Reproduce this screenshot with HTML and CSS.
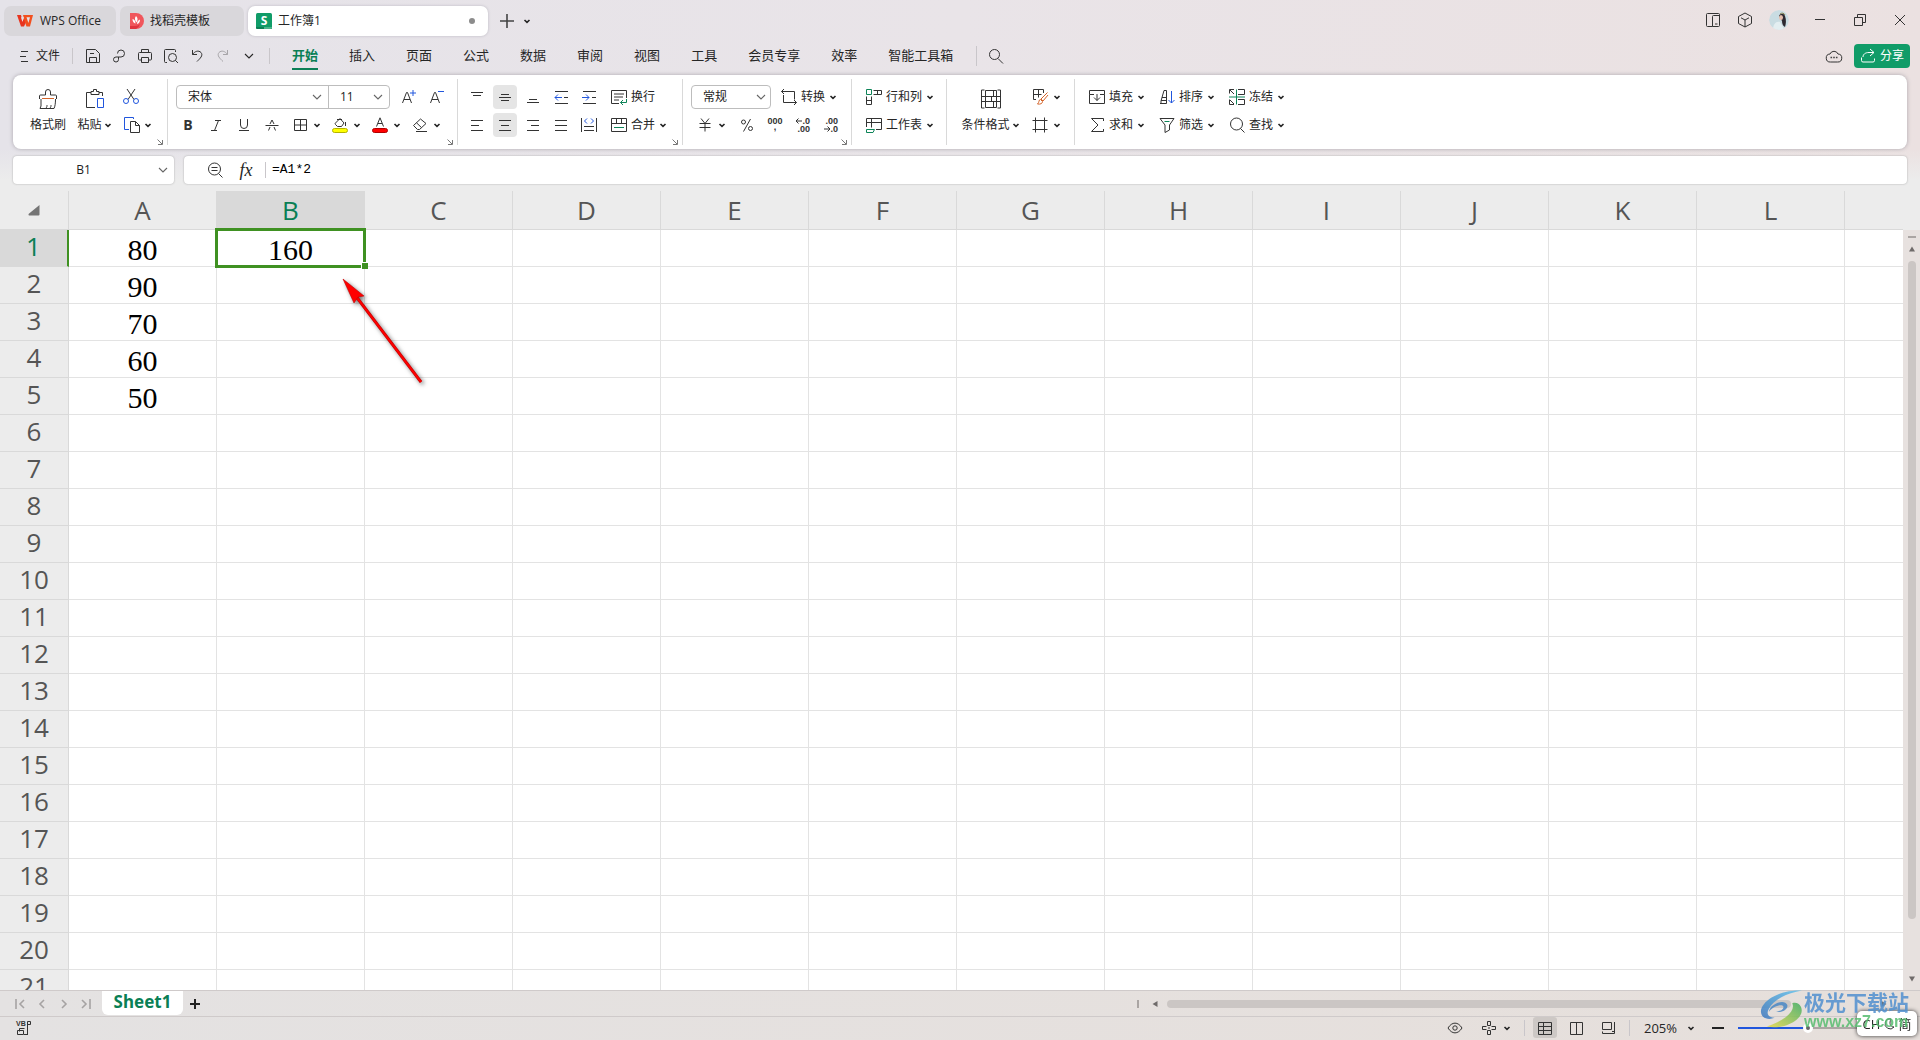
FILE: index.html
```html
<!DOCTYPE html>
<html lang="zh-CN">
<head>
<meta charset="utf-8">
<title>工作簿1 - WPS Office</title>
<link rel="stylesheet" href="styles.css">
</head>
<body>
<svg class="defs" aria-hidden="true">
  <symbol id="chev" viewBox="0 0 10 10"><path d="M2.5 4 5 6.400 7.500 4" fill="none" stroke="currentColor" stroke-width="1.6"/></symbol>
  <symbol id="chev-lg" viewBox="0 0 10 10"><path d="M1 3 5 7 9 3" fill="none" stroke="currentColor" stroke-width="1.1"/></symbol>
  <symbol id="launch" viewBox="0 0 6 6"><path d="M.5 .5 5 5M5.500 1v4.500H1" fill="none" stroke="currentColor" stroke-width="1"/></symbol>
</svg>

<header class="titlebar">
  <button class="tab tab-home"><svg class="i16" viewBox="0 0 16 16"><path d="M0 2h4l1.500 6L8 2.500h2L9 9l-2 4.500H4z" fill="#e8341f"/><path d="M6 2h10l-3 11.500H9.500L8 9.500z" fill="#f2501f"/><path d="M4 4.200h3L5.400 9zM9.500 4.200H13L11.400 10z" fill="#e7e3e6"/></svg><span>WPS Office</span></button>
  <button class="tab tab-template"><svg class="i16" viewBox="0 0 16 16"><path d="M2 0h6a8 8 0 0 1 0 16H2z" fill="#f0565c"/><path d="M2 13h5a7 7 0 0 0 5-2 8 8 0 0 1-4 5H2z" fill="#e0343e"/><path d="M8 3c2 2 2 4 .5 6.500C6.500 7 6.500 5 8 3zM4.500 6c2 .5 3 2 3 4.500-2-.3-3-2-3-4.500zM12 6.500c0 2.500-1 4-3 4.500 0-2 1-4 3-4.500z" fill="#fff"/></svg><span>找稻壳模板</span></button>
  <button class="tab tab-active"><svg class="i16" viewBox="0 0 16 16"><rect width="16" height="16" rx="1.500" fill="#109c68"/><path d="M0 14h16v.5a1.500 1.500 0 0 1-1.500 1.500h-13A1.500 1.500 0 0 1 0 14.500z" fill="#0b7f54"/><path d="M8 14h8v.5a1.500 1.500 0 0 1-1.500 1.500H8z" fill="#49b48a"/><text x="8" y="12" text-anchor="middle" class="t-logo">S</text></svg><span>工作簿1</span><i class="dot"></i></button>
  <button class="ib" aria-label="新建"><svg class="i16" viewBox="0 0 16 16"><path d="M8 1v14M1 8h14" class="s2"/></svg></button>
  <button class="chev-btn" aria-label="更多"><svg class="chev"><use href="#chev"/></svg></button>
  <div class="window-tools">
    <button class="wt" aria-label="侧栏"><svg class="i16" viewBox="0 0 16 16"><path d="M7.500 14.500h-5a1 1 0 0 1-1-1v-11a1 1 0 0 1 1-1h11a1 1 0 0 1 1 1v11a1 1 0 0 1-1 1zM7.500 14.500V4.500a1 1 0 0 1 1-1h6M10 12h2.500" class="s"/></svg></button>
    <button class="wt" aria-label="应用"><svg class="i16" viewBox="0 0 16 16"><path d="M8 1 14.500 4.500v7L8 15l-6.500-3.500v-7zM8 15V8M4 5.800 8 8l4-2.200" class="s"/></svg></button>
    <button class="wt wt-account" aria-label="账户"><svg class="avatar" viewBox="0 0 20 20"><circle cx="10" cy="10" r="10" fill="#c9dce2"/><path d="M4 20c0-6 3-9 7-8l4 7a10 10 0 0 1-11 1z" fill="#e3eef1"/><path d="M10 6c1-3 5-3 6 0 1.500 4 1 8 0 11-2-1-3-3-3-6z" fill="#2d2930"/><ellipse cx="12" cy="7.500" rx="2" ry="2.600" fill="#e6bfae"/><path d="M11 4c2-1.500 4-1 5 1" stroke="#8b8554" fill="none"/></svg></button>
    <button class="wc wc-first" aria-label="最小化"><svg class="i16" viewBox="0 0 16 16"><path d="M3 7.500h10" class="s"/></svg></button>
    <button class="wc" aria-label="还原"><svg class="i16" viewBox="0 0 16 16"><path d="M2.500 5.500h8v8h-8zM5.500 5.500v-3h8v8h-3" class="s"/></svg></button>
    <button class="wc" aria-label="关闭"><svg class="i16" viewBox="0 0 16 16"><path d="M3 3l10 10M13 3 3 13" class="s"/></svg></button>
  </div>
</header>

<nav class="menubar">
  <button class="file"><svg class="i12" viewBox="0 0 12 12"><path d="M3 1.500h7M2 6.500h6M3 11.500h7" class="s"/></svg><span>文件</span></button>
  <i class="vsep"></i>
  <div class="quick">
    <button aria-label="保存"><svg class="i16" viewBox="0 0 16 16"><path d="M1.500 14.500v-13h9l4 4v9zM4.500 14.500v-5h7v5M5 5.500h4" class="s"/></svg></button>
    <button aria-label="分享"><svg class="i16" viewBox="0 0 16 16"><path d="M6.500 5.500a3.500 3.500 0 1 1 3.500 3.500H5a2.500 2.500 0 1 0 2.500 2.500V9" class="s"/></svg></button>
    <button aria-label="打印"><svg class="i16" viewBox="0 0 16 16"><path d="M4.500 4.500v-3h7v3M4.500 12H2.500a1 1 0 0 1-1-1V5.500a1 1 0 0 1 1-1h11a1 1 0 0 1 1 1V11a1 1 0 0 1-1 1h-2M4.500 9.500h7v5h-7z" class="s"/></svg></button>
    <button aria-label="预览"><svg class="i16" viewBox="0 0 16 16"><path d="M4 14.500H2.500a1 1 0 0 1-1-1v-11a1 1 0 0 1 1-1h9a1 1 0 0 1 1 1V4M12.500 12.500l2.500 2.500" class="s"/><circle cx="9.500" cy="9.500" r="4" class="s"/></svg></button>
    <button aria-label="撤销"><svg class="i16" viewBox="0 0 16 16"><path d="M3.500 2v4.500H8M3.500 6.500C6 3 9.500 2 12 4.500c2.500 3-1 6-4 9" class="s"/></svg></button>
    <button class="muted" aria-label="恢复"><svg class="i16" viewBox="0 0 16 16"><path d="M12.500 2v4.500H8M12.500 6.500C10 3 6.500 2 4 4.500c-2.500 3 1 6 4 9" class="s"/></svg></button>
    <button aria-label="自定义"><svg class="i10"><use href="#chev-lg"/></svg></button>
  </div>
  <i class="vsep"></i>
  <div class="menus">
    <a href="#" class="on">开始</a><a href="#">插入</a><a href="#">页面</a><a href="#">公式</a><a href="#">数据</a><a href="#">审阅</a><a href="#">视图</a><a href="#">工具</a><a href="#">会员专享</a><a href="#">效率</a><a href="#">智能工具箱</a>
  </div>
  <i class="vsep tall"></i>
  <button class="ib search" aria-label="搜索"><svg class="i16" viewBox="0 0 16 16"><circle cx="6.500" cy="6.500" r="5" class="s"/><path d="M10 10.500l5 5" class="s"/></svg></button>
  <button class="ib comment" aria-label="评论"><svg class="i16" viewBox="0 0 16 16"><path d="M4 6a4.300 4.300 0 0 1 8 0 4 4 0 0 1-.5 8h-7A4 4 0 0 1 4 6z" class="s"/><path d="M4.500 9.500h1.600M7.200 9.500h1.600M9.900 9.500h1.600" class="s2"/></svg></button>
  <button class="share"><svg class="i16" viewBox="0 0 16 16"><path d="M10 1l4 3.500L10 8M14 4.500H9C5 4.500 3 6.500 3 9M1.500 9.500v3a1.500 1.500 0 0 0 1.500 1.500h10a1.500 1.500 0 0 0 1.500-1.500v-2" class="s"/></svg><span>分享</span></button>
</nav>

<section class="ribbon" aria-label="开始">
  <div class="group g-clip">
    <button class="big brush"><svg class="i20" viewBox="0 0 20 20"><path d="M1.500 10V7a1 1 0 0 1 1-1h5V3a2.500 2.500 0 0 1 5 0v3h5a1 1 0 0 1 1 1v3M3 10v7l-1 2.500h14c1-2 1.500-5 1.500-9.500M8 19c1-1 1-2 1-3M12 19c1-1 1-2 1-3" class="s"/><path d="M4 9.500h12" class="s o"/></svg><span>格式刷</span></button>
    <button class="big paste"><svg class="i20" viewBox="0 0 20 20"><path d="M6 3.500H1.500v15H10M14 3.500h3.500V7M6 5.500v-3h2.500v-2h3v2H14v3z" class="s"/><path d="M12.500 9.500h6v9h-6z" class="s b"/></svg><span>粘贴<svg class="chev"><use href="#chev"/></svg></span></button>
    <div class="rows">
      <button class="ib" aria-label="剪切"><svg class="i16" viewBox="0 0 16 16"><path d="M4 0l7 10.500M12 0 5 10.500" class="s"/><circle cx="3" cy="12" r="2.500" class="s b"/><circle cx="13" cy="12" r="2.500" class="s b"/></svg></button>
      <button class="split" aria-label="复制"><svg class="i18" viewBox="0 0 18 18"><path d="M6 13.500H1.500v-12h9V3" class="s b"/><path d="M7.500 5.500h5l4 4v7h-9zM12.500 5.500v4h4" class="s"/></svg><svg class="chev"><use href="#chev"/></svg></button>
    </div>
    <svg class="launch"><use href="#launch"/></svg>
  </div>

  <div class="group">
    <div class="rows">
      <div class="row">
        <div class="combo-pair">
          <label class="combo font"><select aria-label="字体"><option>宋体</option></select><svg class="i10"><use href="#chev-lg"/></svg></label>
          <label class="combo size"><select aria-label="字号"><option>11</option></select><svg class="i10"><use href="#chev-lg"/></svg></label>
        </div>
        <button class="ib" aria-label="增大字号"><svg class="i16" viewBox="0 0 16 16"><path d="M1.500 14 5.500 3.500h1L10.500 14M3 10.500h6" class="s"/><path d="M12 1v6M9 4h6" class="s b"/></svg></button>
        <button class="ib" aria-label="减小字号"><svg class="i16" viewBox="0 0 16 16"><path d="M1.500 14 5.500 3.500h1L10.500 14M3 10.500h6" class="s"/><path d="M9 2.500h6" class="s b"/></svg></button>
      </div>
      <div class="row">
        <button class="ib" aria-label="加粗"><svg class="i16" viewBox="0 0 16 16"><text x="8" y="13" text-anchor="middle" class="t-bold">B</text></svg></button>
        <button class="ib" aria-label="倾斜"><svg class="i16" viewBox="0 0 16 16"><path d="M7 3.500h6M3 13.500h6M10.500 3.500l-4 10" class="s"/></svg></button>
        <button class="ib" aria-label="下划线"><svg class="i16" viewBox="0 0 16 16"><path d="M4.500 2v6a3.500 3.500 0 0 0 7 0V2M3 13.500h10" class="s"/></svg></button>
        <button class="ib" aria-label="删除线"><svg class="i16" viewBox="0 0 16 16"><path d="M4.500 13.500 6 10M10 10l1.500 3.500M6 7l2-4 2 4M1.500 8.500h13" class="s"/></svg></button>
        <button class="split" aria-label="边框"><svg class="i16" viewBox="0 0 16 16"><path d="M2.500 2.500h12v11h-12zM8.500 2.500v11M2.500 8h12" class="s"/></svg><svg class="chev"><use href="#chev"/></svg></button>
        <button class="split" aria-label="填充颜色"><svg class="i16" viewBox="0 0 16 16"><path d="M8 1.500 3.500 6a1 1 0 0 0 0 1.500l2 2h4L12 6zM5 2.500h5M13.500 5v4" class="s"/><rect x=".5" y="11.500" width="15" height="4" rx="2" fill="#ff0" stroke="#b5b300"/></svg><svg class="chev"><use href="#chev"/></svg></button>
        <button class="split" aria-label="字体颜色"><svg class="i16" viewBox="0 0 16 16"><path d="M4.500 9.500 8 .8l3.500 8.700M6 6.500h4" class="s"/><rect x=".5" y="11.500" width="15" height="4" rx="2" fill="red" stroke="#b00000"/></svg><svg class="chev"><use href="#chev"/></svg></button>
        <button class="split" aria-label="清除"><svg class="i16" viewBox="0 0 16 16"><path d="M8.500 2 1.500 8.500l4 4h2l6.500-6zM4.500 5.800l5 4.800M4 14.500h11" class="s"/></svg><svg class="chev"><use href="#chev"/></svg></button>
      </div>
    </div>
    <svg class="launch"><use href="#launch"/></svg>
  </div>

  <div class="group g-align">
    <div class="rows">
      <div class="row">
        <button class="ib" aria-label="顶端对齐"><svg class="i16" viewBox="0 0 16 16"><path d="M2 3.500h12M4 6.500h8" class="s"/></svg></button>
        <button class="ib on" aria-label="垂直居中"><svg class="i16" viewBox="0 0 16 16"><path d="M4 5.500h8M2 8.500h12M4 11.500h8" class="s"/></svg></button>
        <button class="ib" aria-label="底端对齐"><svg class="i16" viewBox="0 0 16 16"><path d="M4 10.500h8M2 13.500h12" class="s"/></svg></button>
        <button class="ib" aria-label="减少缩进"><svg class="i16" viewBox="0 0 16 16"><path d="M2 2.500h13M2 14.500h13M11 8.500h4" class="s"/><path d="M2 8.500h7M5 5.500l-3 3 3 3" class="s b"/></svg></button>
        <button class="ib" aria-label="增加缩进"><svg class="i16" viewBox="0 0 16 16"><path d="M2 2.500h13M2 14.500h13M11 8.500h4" class="s"/><path d="M1 8.500h7M5 5.500l3 3-3 3" class="s b"/></svg></button>
        <button class="tb"><svg class="i16" viewBox="0 0 16 16"><path d="M8 14.500H.5V1.500h15V9M3 5h10M3 8h9M3 11h5" class="s"/><path d="M15.500 10v3.500h-6M12 11l-2.500 2.500L12 16" class="s g"/></svg><span>换行</span></button>
      </div>
      <div class="row">
        <button class="ib" aria-label="左对齐"><svg class="i16" viewBox="0 0 16 16"><path d="M2 3.500h12M2 8.500h8M2 13.500h12" class="s"/></svg></button>
        <button class="ib on" aria-label="水平居中"><svg class="i16" viewBox="0 0 16 16"><path d="M2 3.500h12M4 8.500h8M2 13.500h12" class="s"/></svg></button>
        <button class="ib" aria-label="右对齐"><svg class="i16" viewBox="0 0 16 16"><path d="M2 3.500h12M6 8.500h8M2 13.500h12" class="s"/></svg></button>
        <button class="ib" aria-label="两端对齐"><svg class="i16" viewBox="0 0 16 16"><path d="M2 3.500h12M2 8.500h12M2 13.500h12" class="s"/></svg></button>
        <button class="ib" aria-label="分散对齐"><svg class="i16" viewBox="0 0 16 16"><path d="M.5 1v14M15.500 1v14M3 9.500h10M3 13.500h10" class="s"/><path d="M6 1.500 3.500 4 6 6.500M10 1.500 12.500 4 10 6.500" class="s b"/></svg></button>
        <button class="tb"><svg class="i16" viewBox="0 0 16 16"><path d="M.5 1.500h15v13H.5zM.5 6.500h15M5.500 1.500v5M10.500 1.500v5" class="s"/><path d="M3 10.500h10" class="s g"/></svg><span>合并</span><svg class="chev"><use href="#chev"/></svg></button>
      </div>
    </div>
    <svg class="launch"><use href="#launch"/></svg>
  </div>

  <div class="group">
    <div class="rows">
      <div class="row">
        <label class="combo boxed"><select aria-label="数字格式"><option>常规</option></select><svg class="i10"><use href="#chev-lg"/></svg></label>
        <button class="tb"><svg class="i16" viewBox="0 0 16 16"><path d="M.5 2.500h13v8M3 0 .5 2.500 3 5M2.500 6v7.500h13M13 11l2.500 2.500L13 16" class="s"/></svg><span>转换</span><svg class="chev"><use href="#chev"/></svg></button>
      </div>
      <div class="row">
        <button class="split wide" aria-label="货币"><svg class="i16" viewBox="0 0 16 16"><path d="M4 1.500l4 5 4-5M8 6.500v8M2.500 6.500h11M2.500 10.500h11" class="s"/></svg><svg class="chev"><use href="#chev"/></svg></button>
        <button class="ib" aria-label="百分比"><svg class="i16" viewBox="0 0 16 16"><circle cx="4.500" cy="5" r="2" class="s"/><circle cx="11.500" cy="11.500" r="2" class="s"/><path d="M11.500 2 4.500 14.500" class="s"/></svg></button>
        <button class="ib" aria-label="千位分隔"><svg class="i16" viewBox="0 0 16 16"><text x="8" y="7" text-anchor="middle" class="t-num">000</text><text x="8" y="13" text-anchor="middle" class="t-num">,</text></svg></button>
        <button class="ib" aria-label="增加小数位"><svg class="i16" viewBox="0 0 16 16"><text x="15" y="7" text-anchor="end" class="t-num">.0</text><text x="15" y="15" text-anchor="end" class="t-num">.00</text><path d="M1 4h6M3.500 1.500 1 4l2.500 2.500" class="s"/></svg></button>
        <button class="ib" aria-label="减少小数位"><svg class="i16" viewBox="0 0 16 16"><text x="15" y="7" text-anchor="end" class="t-num">.00</text><text x="15" y="15" text-anchor="end" class="t-num">.0</text><path d="M1 12h6M4.500 9.500 7 12l-2.500 2.500" class="s"/></svg></button>
      </div>
    </div>
    <svg class="launch"><use href="#launch"/></svg>
  </div>

  <div class="group">
    <div class="rows">
      <button class="tb"><svg class="i16" viewBox="0 0 16 16"><path d="M7.500 1.500h8v4h-8M11.500 1.500v4M.5 7.500v8h5v-8M.5 11.500h5" class="s"/><path d="M.5 .5h5v5h-5z" class="s g"/></svg><span>行和列</span><svg class="chev"><use href="#chev"/></svg></button>
      <button class="tb"><svg class="i16" viewBox="0 0 16 16"><path d="M.5 10V1.500h15v11H10M.5 5.500h15M5.500 1.500v9" class="s"/><path d="M.5 12.500h8l-1.500 3H.5z" class="s g"/></svg><span>工作表</span><svg class="chev"><use href="#chev"/></svg></button>
    </div>
  </div>

  <div class="group g-format">
    <button class="big cond"><svg class="i20" viewBox="0 0 20 20"><path d="M3.500 1H.5v18h3M16.500 1h3v18h-3M4.500 1.500h11v17h-11zM.5 7.500h19M.5 12.500h19M12.500 1.500v6M10.500 7.500v5M12.500 12.500v6" class="s"/></svg><span>条件格式<svg class="chev"><use href="#chev"/></svg></span></button>
    <div class="rows">
      <button class="split" aria-label="表格样式"><svg class="i16" viewBox="0 0 16 16"><path d="M4 10.500H1.500V.5h10V4M1.500 5.500h8M6.500 .5v8" class="s"/><path d="M15.500 3.500 9 10l2 2 5-6M8.500 10.500c-2 0-1 3-3 4.500 3 .5 5-.5 5-2.500z" class="s o"/></svg><svg class="chev"><use href="#chev"/></svg></button>
      <button class="split" aria-label="单元格"><svg class="i16" viewBox="0 0 16 16"><path d="M3.500 .5v15M12.500 .5v15M.5 3.500h15M.5 12.500h15" class="s"/></svg><svg class="chev"><use href="#chev"/></svg></button>
    </div>
  </div>

  <div class="group g-last">
    <div class="rows">
      <div class="row">
        <button class="tb"><svg class="i16" viewBox="0 0 16 16"><path d="M5 5.500H.5v-4h15v4H11M.5 5.500v9h15v-9M8 5v6.500M5 8.500l3 3 3-3" class="s"/></svg><span>填充</span><svg class="chev"><use href="#chev"/></svg></button>
        <button class="tb"><svg class="i16" viewBox="0 0 16 16"><path d="M1 14.500h6.500V1.500H5L2 12v2M3 8.500h4M2 11.500h5.500" class="s"/><path d="M12.500 2v12M9.500 11l3 3 3-3" class="s b"/></svg><span>排序</span><svg class="chev"><use href="#chev"/></svg></button>
        <button class="tb"><svg class="i16" viewBox="0 0 16 16"><path d="M5 .5H.5v4M1 1l4 4M9 .5h6.500v5H9M9 10.500h6.500v5H9M5 15.500H.5v-5M1 11l4 4" class="s"/><path d="M7.500 .5v15M0 8h16" class="s g"/></svg><span>冻结</span><svg class="chev"><use href="#chev"/></svg></button>
      </div>
      <div class="row">
        <button class="tb"><svg class="i16" viewBox="0 0 16 16"><path d="M14.500 4V1.500h-12L9 8l-6.500 6.500h12V12" class="s"/></svg><span>求和</span><svg class="chev"><use href="#chev"/></svg></button>
        <button class="tb"><svg class="i16" viewBox="0 0 16 16"><path d="M1 1.500h14L10.500 8v5L6 15.500V8z" class="s"/><path d="M5.500 4.500h5" class="s g"/></svg><span>筛选</span><svg class="chev"><use href="#chev"/></svg></button>
        <button class="tb"><svg class="i16" viewBox="0 0 16 16"><circle cx="7.500" cy="7" r="6" class="s"/><path d="M11.500 11.500l4 4" class="s"/></svg><span>查找</span><svg class="chev"><use href="#chev"/></svg></button>
      </div>
    </div>
  </div>
</section>

<section class="formula">
  <div class="namebox"><input type="text" value="B1" aria-label="名称框"><svg class="i10"><use href="#chev-lg"/></svg></div>
  <div class="formula-box">
    <button class="ib" aria-label="查看"><svg class="i16" viewBox="0 0 16 16"><circle cx="7.500" cy="7" r="6" class="s"/><path d="M4.500 5.500h6M4.500 8.500h6M11.500 11.500l4 4" class="s"/></svg></button>
    <button class="fx" aria-label="插入函数">fx</button>
    <i class="vsep"></i>
    <input type="text" value="=A1*2" aria-label="编辑栏">
  </div>
</section>

<main class="sheet">
  <div class="grid">
    <table>
      <thead><tr id="columns"><th class="corner"><svg class="i12" viewBox="0 0 12 12"><path d="M11.500 1v9.500a1 1 0 0 1-1 1H1.500a1 1 0 0 1-.7-1.700z" fill="#757575"/></svg></th></tr></thead>
      <tbody id="rows"></tbody>
    </table>
    <svg class="arrow" viewBox="0 0 100 120"><g class="arrow-shadow"><path d="M22 25 88 112" fill="none" stroke="#c00000" stroke-width="3"/><path d="M22 25 88 112" fill="none" stroke="red" stroke-width="2"/><path d="M10 9 31 26 25 27 21 33z" fill="red" stroke="#c00000" stroke-width=".6"/></g></svg>
  </div>
  <div class="vscroll"><i class="grip"></i><svg class="i10" viewBox="0 0 10 10"><path d="M5 2.500 8 7.500H2z" fill="#6f6b6a"/></svg><i class="thumb"></i><svg class="i10 down" viewBox="0 0 10 10"><path d="M5 7.500 8 2.500H2z" fill="#6f6b6a"/></svg></div>
</main>

<div class="sheetbar">
  <div class="sheet-nav">
    <button aria-label="第一个"><svg class="i12" viewBox="0 0 12 12"><path d="M2 1v10M10 2 6 6l4 4" class="s2"/></svg></button>
    <button aria-label="上一个"><svg class="i12" viewBox="0 0 12 12"><path d="M8 2 4 6l4 4" class="s2"/></svg></button>
    <button aria-label="下一个"><svg class="i12" viewBox="0 0 12 12"><path d="M4 2l4 4-4 4" class="s2"/></svg></button>
    <button aria-label="最后一个"><svg class="i12" viewBox="0 0 12 12"><path d="M10 1v10M2 2l4 4-4 4" class="s2"/></svg></button>
  </div>
  <button class="sheet-tab">Sheet1</button>
  <button class="ib" aria-label="新建工作表"><svg class="i12" viewBox="0 0 12 12"><path d="M6 1v10M1 6h10" stroke="#222" stroke-width="2"/></svg></button>
  <div class="hscroll"><i class="grip"></i><svg class="i10" viewBox="0 0 10 10"><path d="M2.500 5 7.500 2v6z" fill="#6f6b6a"/></svg><i class="thumb"></i><svg class="i10" viewBox="0 0 10 10"><path d="M7.500 5 2.500 2v6z" fill="#6f6b6a"/></svg></div>
</div>

<footer class="status">
  <button class="vbp" aria-label="VBP"><svg class="i16" viewBox="0 0 16 16"><text x="0" y="6" class="t-vb">VB</text><path d="M11.500 14.500V1.500h3v3h-3M8.500 8.500h-5v3M1.500 10.500h6v4h-6zM8 14.500h4" class="s"/></svg></button>
  <div class="status-right">
    <button class="ib" aria-label="护眼"><svg class="i16" viewBox="0 0 16 16"><path d="M1 8c4-6.500 10-6.500 14 0-4 6.500-10 6.500-14 0z" class="s"/><circle cx="8" cy="8" r="2.200" class="s"/></svg></button>
    <button class="split st-focus" aria-label="阅读模式"><svg class="i14" viewBox="0 0 14 14"><path d="M5.500 4.500v-4h3v4zM5.500 13.500v-4h3v4zM4.500 5.500h-4v3h4M9.500 5.500h4v3h-4M6 7h2" class="s"/></svg><svg class="chev"><use href="#chev"/></svg></button>
    <i class="vsep"></i>
    <button class="view on" aria-label="普通"><svg class="i14" viewBox="0 0 14 14"><path d="M.5 1.500h13v12H.5zM.5 5.500h13M.5 9.500h13M5.500 1.500v12" class="s"/></svg></button>
    <button class="view" aria-label="分页预览"><svg class="i14" viewBox="0 0 14 14"><path d="M.5 1.500h12v12H.5zM6.500 1.500v12" class="s"/></svg></button>
    <button class="view" aria-label="页面布局"><svg class="i14" viewBox="0 0 14 14"><path d="M.5 1.500h9v7h-9zM12.500 1v11.500H.5v-2M10 10.500h2" class="s"/></svg></button>
    <i class="vsep"></i>
    <button class="zoom-val">205%<svg class="chev"><use href="#chev"/></svg></button>
    <button class="ib" aria-label="缩小"><svg class="i12" viewBox="0 0 12 12"><path d="M0 6h12" stroke="#222" stroke-width="2"/></svg></button>
    <input class="zoom" type="range" min="0" max="100" value="50" aria-label="缩放">
  </div>
</footer>

<div class="ime"><span>CH</span><svg class="i12" viewBox="0 0 12 12"><path d="M8 1a5 5 0 1 0 3 8C7 9 6 5 8 1z" class="s"/></svg><span>简</span></div>
<div class="mark">
  <svg class="mark-logo" viewBox="0 0 42 40"><defs><linearGradient id="wb" x1="0" y1="1" x2="1" y2="0"><stop offset="0" stop-color="#3d76bd"/><stop offset="1" stop-color="#62c4ee"/></linearGradient><linearGradient id="wg" x1="0" y1="1" x2="1" y2="0"><stop offset="0" stop-color="#e6d94a"/><stop offset="1" stop-color="#3fae62"/></linearGradient></defs><path d="M42 1C22 0 3 9 0 21c-1 8 7 11 14 8-6 0-9-4-6-9C13 10 26 4 42 1z" fill="url(#wb)"/><path d="M8 23c1-8 16-14 19-7 1 5-7 9-12 6 4 1 8-1 8-4 0-4-11-1-15 5z" fill="#4a88c6"/><path d="M32 14c4 8-8 18-26 24 18 4 40-8 35-20-2-4-5-5-9-4z" fill="url(#wg)"/></svg>
  <div><div class="mark-name">极光下载站</div><div class="mark-url">www.xz7.com</div></div>
</div>
<script src="sheet.js"></script>
</body>
</html>
```
FILE: styles.css
```css
* { box-sizing: border-box; }
html, body { height: 100%; }
body {
  margin: 0;
  display: flex;
  flex-direction: column;
  overflow: hidden;
  font: 12px/16px "Open Sans", "Noto Sans CJK SC", sans-serif;
  color: #262626;
  background: linear-gradient(90deg, #e5e3e9, #e9e4e8 50%, #ebe1e1);
}
button, input, select { font: inherit; color: inherit; border: 0; background: none; padding: 0; margin: 0; }
button { display: flex; align-items: center; justify-content: center; white-space: nowrap; flex: none; }
input, select { outline: none; min-width: 0; }
a { color: inherit; text-decoration: none; }
svg { display: block; flex: none; overflow: visible; }
.defs { width: 0; height: 0; position: absolute; }

.s { fill: none; stroke: #333; stroke-width: 1; }
.s2 { fill: none; stroke: #444; stroke-width: 1.6; }
.b { stroke: #2156dd; }
.g { stroke: #0d8458; }
.o { stroke: #d4642a; }
.t-logo { font: bold 12px "Open Sans", sans-serif; fill: #fff; }
.t-bold { font: bold 14px "Open Sans", sans-serif; fill: #333; }
.t-num { font: bold 9px "Liberation Sans", sans-serif; fill: #333; }
.t-vb { font: bold 7px "Liberation Sans", sans-serif; fill: #333; }
.i10, .chev { width: 10px; height: 10px; }
.i12 { width: 12px; height: 12px; }
.i14 { width: 14px; height: 14px; }
.i16 { width: 16px; height: 16px; }
.i18 { width: 18px; height: 18px; }
.i20 { width: 20px; height: 20px; }
.ib { width: 24px; height: 24px; border-radius: 4px; }
.ib.on { background: #e5e5e5; }
.vsep { width: 1px; height: 16px; background: #c9c6ca; flex: none; }
.vsep.tall { height: 20px; }

/* Title bar */
.titlebar { display: flex; align-items: center; gap: 4px; padding: 6px 0 0 4px; flex: none; }
.tab { height: 30px; gap: 6px; border-radius: 7px; background: #d9d7db; justify-content: flex-start; }
.tab-home { width: 112px; padding-left: 13px; gap: 7px; }
.tab-template { width: 124px; padding-left: 8px; }
.tab-active { width: 240px; background: #fff; padding: 0 13px 0 8px; box-shadow: 0 0 3px #bbb8c0; }
.dot { width: 6px; height: 6px; border-radius: 3px; background: #8c8c8c; margin-left: auto; }
.titlebar > .ib { margin-left: 3px; }
.chev-btn { width: 10px; height: 24px; margin-left: -1px; }
.window-tools { display: flex; align-items: center; height: 28px; margin-left: auto; align-self: flex-start; }
.wt { width: 32px; height: 28px; }
.wt-account { margin-left: 2px; }
.wc { width: 40px; height: 28px; }
.wc-first { margin-left: 5px; }
.avatar { width: 20px; height: 20px; border-radius: 10px; overflow: hidden; }

/* Menu row */
.menubar { display: flex; align-items: center; height: 39px; flex: none; padding: 0 10px 0 18px; }
.file { gap: 6px; margin-right: 12px; }
.quick { display: flex; margin: 0 7px; }
.quick button { width: 26px; height: 24px; }
.muted { opacity: .35; }
.menus { display: flex; gap: 31px; margin: 0 23px 0 22px; font-size: 13px; }
.menus a { line-height: 22px; padding: 2px 0; border-bottom: 2px solid transparent; white-space: nowrap; }
.menus a.on { color: #0a7f55; font-weight: bold; border-color: #0a7f55; }
.search { margin-left: 7px; }
.comment { margin-left: auto; }
.share { width: 56px; height: 24px; margin-left: 8px; gap: 4px; border-radius: 4px; background: #109c68; color: #fff; }
.share .s { stroke: #fff; }

/* Ribbon */
.ribbon { display: flex; align-items: stretch; flex: none; margin: 0 13px; height: 74px; padding: 4px 0; background: #fff; border-radius: 8px; box-shadow: 0 0 4px #aaa6ad; }
.group { display: flex; position: relative; flex: none; padding: 6px 0 6px 8px; border-right: 1px solid #d9d9d9; }
.g-last { border: 0; }
.rows { display: flex; flex-direction: column; gap: 4px; padding-right: 8px; }
.row { display: flex; align-items: center; gap: 4px; }
.g-clip { padding-left: 10px; }
.g-clip .rows { margin-left: 4px; padding-right: 12px; }
.g-align .rows { padding-right: 10px; }
.g-align { padding-left: 7px; }
.g-align .row { padding-right: 1px; }
.big { flex-direction: column; justify-content: space-between; padding: 4px 0 4px; height: 52px; }
.big span { display: flex; align-items: center; gap: 1px; }
.brush { width: 50px; }
.paste { width: 40px; margin-left: 2px; }
.cond { width: 68px; }
.g-format { padding-left: 10px; }
.g-format .rows { padding-right: 10px; margin-left: 3px; }
.split { width: 36px; height: 24px; padding: 0 2px 0 4px; justify-content: space-between; }
.split.wide { width: 40px; padding: 0 4px 0 6px; }
.tb { height: 24px; gap: 4px; padding: 0 3px 0 6px; justify-content: flex-start; }
.tb .chev { margin-left: -1px; }
.launch { position: absolute; right: 4px; bottom: 0; width: 6px; height: 6px; color: #777; }
.combo-pair { display: flex; height: 24px; border: 1px solid #bdbdbd; border-radius: 4px; margin-right: 3px; }
.combo { display: grid; grid-template-columns: 1fr 16px; align-items: center; color: #666; }
.combo select { grid-area: 1 / 1 / 2 / 3; appearance: none; color: #222; padding-left: 11px; height: 22px; }
.combo svg { grid-area: 1 / 2; pointer-events: none; }
.font { width: 152px; border-right: 1px solid #bdbdbd; }
.size { width: 60px; }
.boxed { width: 80px; height: 24px; border: 1px solid #bdbdbd; border-radius: 4px; grid-template-columns: 1fr 14px; }

/* Formula bar */
.formula { display: flex; gap: 10px; flex: none; padding: 7px 13px 7px; background: linear-gradient(#e9e4e800, #ececec 75%); }
.namebox, .formula-box { display: flex; align-items: center; height: 28px; background: #fff; border-radius: 4px; box-shadow: 0 0 2px #a5a5a5; }
.namebox { width: 161px; padding-right: 6px; color: #666; }
.namebox input { flex: 1; text-align: center; color: #222; padding-right: 4px; }
.formula-box { flex: 1; padding-left: 19px; }
.fx { width: 24px; margin: 0 7px 0 7px; font: italic 18px/24px "Liberation Serif", serif; }
.formula-box input { flex: 1; padding-left: 6px; font: 13px/24px "Liberation Mono", monospace; color: #000; }

/* Sheet */
.sheet { display: flex; flex: 1; min-height: 0; }
.grid { flex: 1; min-width: 0; overflow: hidden; position: relative; background: #fff; }
table { width: 100%; table-layout: fixed; border-collapse: separate; border-spacing: 0; }
th { font-size: 26px; font-weight: normal; line-height: 36px; color: #555; background: #ececec; padding: 0; border: solid #d9d9d9; border-width: 0 1px 1px 0; }
thead th { width: 148px; height: 39px; }
thead th:last-child { width: auto; border-right: 0; }
thead .corner { width: 69px; }
.corner svg { margin: 0 auto; }
tbody th { line-height: 32px; padding: 0 0 4px; }
th.sel { background: #d9d9d9; color: #0a7f55; }
tbody th.sel { border-right: 2px solid #3f9122; }
td { height: 37px; padding: 4px 0 0; border: solid #e3e3e3; border-width: 0 1px 1px 0; font: 30px/32px "Liberation Serif", serif; color: #000; text-align: center; }
td:last-child { border-right: 0; }
td.active { position: relative; }
td.active::before { content: ""; position: absolute; inset: -2px -2px -2px -2px; border: 3px solid #3f9122; }
td.active::after { content: ""; position: absolute; right: -4px; bottom: -3px; width: 6px; height: 6px; background: #3f9122; border: solid #fff; border-width: 1px 0 0 1px; }
.arrow { position: absolute; left: 333px; top: 79px; width: 100px; height: 120px; }
.arrow-shadow { filter: drop-shadow(2px 2px 2px #0008); }
.vscroll { width: 17px; flex: none; display: flex; flex-direction: column; align-items: center; border-top: 39px solid #ececec; background: #e7e1df; padding: 6px 0 6px; }
.vscroll .grip { width: 8px; height: 2px; background: #aaa5a3; margin-bottom: 6px; }
.vscroll .thumb { width: 8px; flex: 0 1 658px; margin-top: 7px; border-radius: 4px; background: #cbc6c4; }
.vscroll .down { margin-top: auto; }

/* Sheet tabs */
.sheetbar { display: flex; align-items: center; flex: none; height: 27px; padding-left: 9px; border: solid #cfcaca; border-width: 1px 0; background: linear-gradient(90deg, #e4e2e2, #e6dfdb); }
.sheet-nav { display: flex; width: 93px; }
.sheet-nav button { width: 22px; height: 20px; }
.sheet-nav .s2 { stroke: #a6a3a3; }
.sheet-tab { width: 81px; height: 24px; padding-bottom: 2px; align-self: flex-start; background: #fff; border-radius: 0 0 6px 6px; color: #0a7f55; font: bold 17px/22px "Noto Sans", sans-serif; }
.hscroll { display: flex; align-items: center; width: 41%; margin-left: auto; padding-right: 31px; }
.hscroll .grip { width: 2px; height: 8px; background: #aaa5a3; margin-right: 11px; }
.hscroll .thumb { flex: 1; height: 8px; border-radius: 4px; background: #cbc6c4; margin: 0 88px 0 7px; }

/* Status bar */
.status { display: flex; align-items: center; justify-content: space-between; height: 23px; flex: none; padding: 0 43px 2px 16px; background: linear-gradient(90deg, #e4e2e2, #e6dfdb); }
.status-right { display: flex; align-items: center; }
.status-right > .ib { height: 21px; }
.st-focus { height: 21px; margin: 0 10px 0 11px; }
.view { width: 24px; height: 21px; border-radius: 3px; margin-left: 8px; }
.view.on { background: #cdc8c5; }
.view + .vsep { margin-left: 8px; }
.zoom-val { font-size: 13px; gap: 9px; margin: 0 10px 0 14px; }
.zoom { appearance: none; width: 139px; height: 12px; margin-left: 8px; }
.zoom::-webkit-slider-runnable-track { height: 2px; background: linear-gradient(90deg, #2156dd 50%, #aba6a3 50%); }
.zoom::-webkit-slider-thumb { appearance: none; width: 10px; height: 10px; margin-top: -4px; border-radius: 5px; background: #666; border: 3px solid #fff; }

/* Input-method bubble and site mark float above the window */
.ime { position: fixed; right: 3px; bottom: 4px; width: 60px; height: 25px; display: flex; align-items: center; justify-content: center; gap: 3px; background: #fff; border-radius: 5px; box-shadow: 0 0 4px #333; font-size: 13px; }
.mark { position: fixed; right: 11px; bottom: 9px; width: 148px; display: flex; gap: 2px; opacity: .85; pointer-events: none; }
.mark-logo { width: 41px; height: 40px; }
.mark-name { font: bold 21px/24px "Noto Sans CJK SC", sans-serif; color: #5090cf; white-space: nowrap; }
.mark-url { font: bold 16px/18px "Liberation Sans", sans-serif; color: #58bd70; }
```
FILE: sheet.js
```js
const letters = "ABCDEFGHIJKL".split("");
const values = { A1: 80, A2: 90, A3: 70, A4: 60, A5: 50, B1: 160 };
const active = { col: "B", row: 1 };

const columns = document.getElementById("columns");
for (const letter of [...letters, ""]) {
  const th = document.createElement("th");
  th.textContent = letter;
  if (letter === active.col) th.className = "sel";
  columns.append(th);
}

const rows = document.getElementById("rows");
for (let n = 1; n <= 21; n++) {
  const tr = document.createElement("tr");
  const th = document.createElement("th");
  th.textContent = n;
  if (n === active.row) th.className = "sel";
  tr.append(th);
  for (const letter of [...letters, ""]) {
    const td = document.createElement("td");
    td.textContent = values[letter + n] ?? "";
    if (letter === active.col && n === active.row) td.className = "active";
    tr.append(td);
  }
  rows.append(tr);
}
```
